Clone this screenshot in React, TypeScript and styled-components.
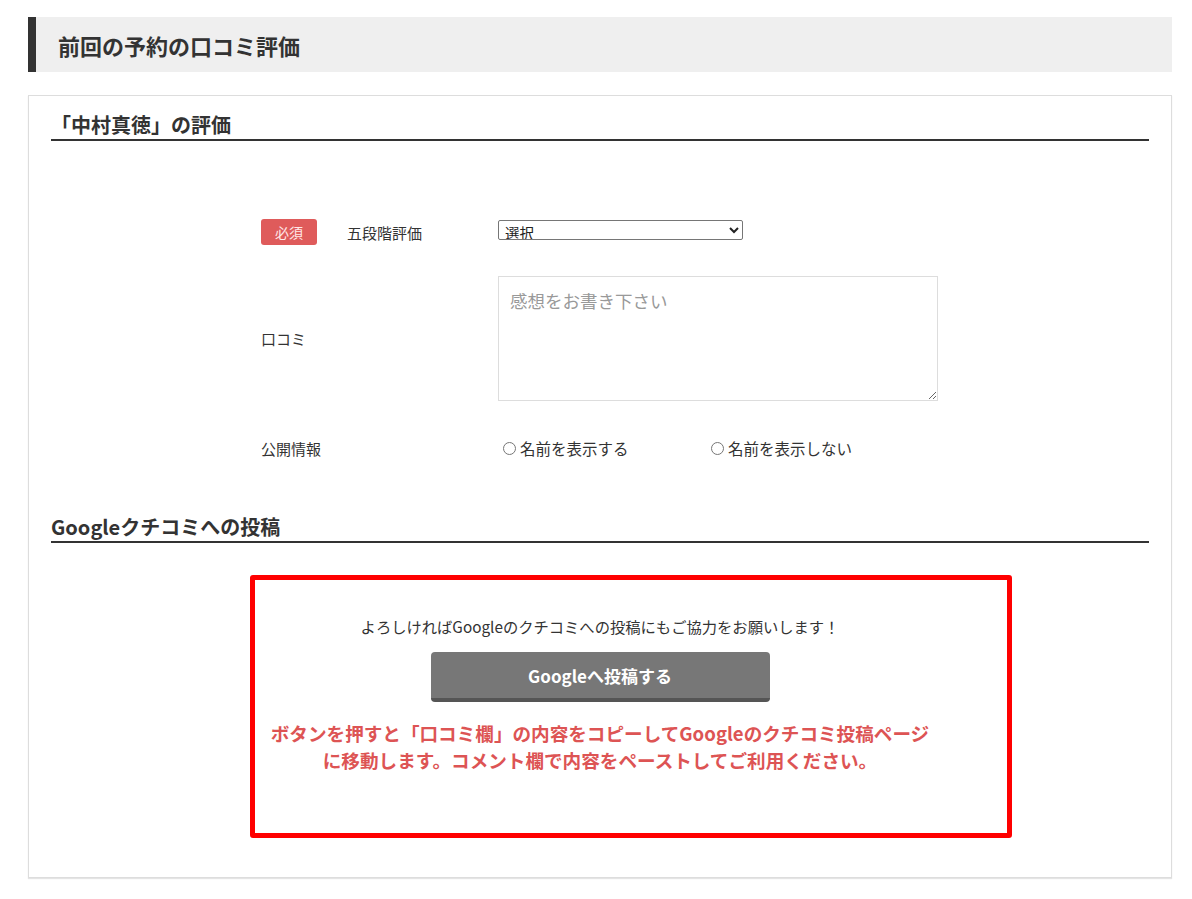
import React from "react";
import styled, { createGlobalStyle } from "styled-components";

const Global = createGlobalStyle`
  html, body { margin: 0; padding: 0; background: #fff; }
  body {
    font-family: "Noto Sans CJK JP", "Noto Sans", "Liberation Sans", sans-serif;
    color: #333;
  }
  * { box-sizing: border-box; }
`;

const Page = styled.div`
  width: 1192px;
  padding: 17px 20px 20px 28px;
`;

const PageTitle = styled.h1`
  margin: 0;
  height: 55px;
  display: flex;
  align-items: center;
  padding-left: 22px;
  border-left: 8px solid #333;
  background: #efefef;
  font-size: 22px;
  font-weight: 700;
  color: #333;
  letter-spacing: 0;
`;

const Card = styled.section`
  margin-top: 23px;
  border: 1px solid #ddd;
  box-shadow: 0 1px 1px #e4e4e4;
  padding: 15px 22px 39px 22px;
`;

const SectionTitle = styled.h2<{ $top?: number }>`
  margin: ${(p) => p.$top ?? 0}px 0 0 0;
  font-size: 20px;
  line-height: 28px;
  font-weight: 700;
  color: #333;
  border-bottom: 2px solid #333;
`;

const Form = styled.div`
  margin: 78px 0 0 210px;
  width: 687px;
  display: flex;
  flex-direction: column;
`;

const Row = styled.div<{ $gap: number }>`
  display: grid;
  grid-template-columns: 237px 1fr;
  align-items: center;
  margin-top: ${(p) => p.$gap}px;
`;

const LabelCell = styled.div`
  display: flex;
  align-items: center;
  font-size: 15px;
  color: #333;
`;

const Required = styled.span`
  display: inline-flex;
  align-items: center;
  justify-content: center;
  width: 56px;
  height: 26px;
  border-radius: 3px;
  background: #df5b5b;
  color: #ffe8e8;
  font-size: 14px;
  margin-right: 30px;
`;

const Select = styled.select`
  width: 245px;
  height: 20px;
  font-size: 14.5px;
  font-family: inherit;
  color: #222;
  padding: 0 2px;
  border: 1px solid #767676;
  border-radius: 2px;
  background: #fff;
`;

const TextArea = styled.textarea`
  width: 440px;
  height: 125px;
  border: 1px solid #ddd;
  padding: 11px 11px;
  font-family: inherit;
  font-size: 17.5px;
  color: #333;
  display: block;
  &::placeholder { color: #999; }
`;

const Radios = styled.div`
  display: flex;
  align-items: center;
`;

const RadioLabel = styled.label<{ $w?: number }>`
  display: inline-flex;
  align-items: center;
  font-size: 15.5px;
  color: #333;
  width: ${(p) => (p.$w ? `${p.$w}px` : "auto")};
  input { margin: 0 4px 0 5px; width: 13px; height: 13px; }
`;

const Notice = styled.div`
  margin: 32px 0 0 199px;
  width: 762px;
  border: 5px solid #ff0000;
  border-radius: 3px;
  padding: 36px 72px 60px 10px;
  display: flex;
  flex-direction: column;
  align-items: center;
`;

const Lead = styled.p`
  margin: 0;
  font-size: 15.3px;
  line-height: 20px;
  color: #333;
`;

const GoogleButton = styled.button`
  margin-top: 16px;
  width: 339px;
  height: 50px;
  border: none;
  border-bottom: 4px solid #555;
  border-radius: 4px;
  background: #777;
  color: #fff;
  font-family: inherit;
  font-size: 17px;
  font-weight: 700;
  cursor: pointer;
`;

const Warning = styled.p`
  margin: 17px 0 0 0;
  font-size: 18.6px;
  line-height: 27px;
  font-weight: 700;
  color: #dd5454;
  text-align: center;
  white-space: nowrap;
`;

export default function App() {
  return (
    <>
      <Global />
      <Page>
        <PageTitle>前回の予約の口コミ評価</PageTitle>
        <Card>
          <SectionTitle>「中村真徳」の評価</SectionTitle>
          <Form>
            <Row $gap={0}>
              <LabelCell>
                <Required>必須</Required>五段階評価
              </LabelCell>
              <div>
                <Select defaultValue="">
                  <option value="">選択</option>
                  <option value="5">5</option>
                  <option value="4">4</option>
                  <option value="3">3</option>
                  <option value="2">2</option>
                  <option value="1">1</option>
                </Select>
              </div>
            </Row>
            <Row $gap={31}>
              <LabelCell>口コミ</LabelCell>
              <TextArea placeholder="感想をお書き下さい" />
            </Row>
            <Row $gap={36}>
              <LabelCell>公開情報</LabelCell>
              <Radios>
                <RadioLabel $w={208}>
                  <input type="radio" name="pub" />
                  名前を表示する
                </RadioLabel>
                <RadioLabel>
                  <input type="radio" name="pub" />
                  名前を表示しない
                </RadioLabel>
              </Radios>
            </Row>
          </Form>
          <SectionTitle $top={54}>Googleクチコミへの投稿</SectionTitle>
          <Notice>
            <Lead>よろしければGoogleのクチコミへの投稿にもご協力をお願いします！</Lead>
            <GoogleButton type="button">Googleへ投稿する</GoogleButton>
            <Warning>
              ボタンを押すと「口コミ欄」の内容をコピーしてGoogleのクチコミ投稿ページ
              <br />
              に移動します。コメント欄で内容をペーストしてご利用ください。
            </Warning>
          </Notice>
        </Card>
      </Page>
    </>
  );
}
